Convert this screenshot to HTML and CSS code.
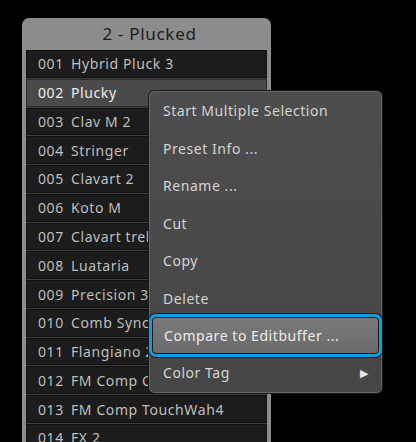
FILE: index.html
```html
<!DOCTYPE html>
<html>
<head>
<meta charset="utf-8">
<link rel="stylesheet" href="styles.css">
</head>
<body>
<div class="stage">
  <div class="bank">
    <div class="bank-title">2 - Plucked</div>
    <div class="rows">
      <div class="row"><span class="num">001</span><span class="name">Hybrid Pluck 3</span></div>
      <div class="row selected"><span class="num">002</span><span class="name">Plucky</span></div>
      <div class="row"><span class="num">003</span><span class="name">Clav M 2</span></div>
      <div class="row"><span class="num">004</span><span class="name">Stringer</span></div>
      <div class="row"><span class="num">005</span><span class="name">Clavart 2</span></div>
      <div class="row"><span class="num">006</span><span class="name">Koto M</span></div>
      <div class="row"><span class="num">007</span><span class="name">Clavart treble</span></div>
      <div class="row"><span class="num">008</span><span class="name">Luataria</span></div>
      <div class="row"><span class="num">009</span><span class="name">Precision 3</span></div>
      <div class="row"><span class="num">010</span><span class="name">Comb Sync</span></div>
      <div class="row"><span class="num">011</span><span class="name">Flangiano 2</span></div>
      <div class="row"><span class="num">012</span><span class="name">FM Comp Clav</span></div>
      <div class="row"><span class="num">013</span><span class="name">FM Comp TouchWah4</span></div>
      <div class="row"><span class="num">014</span><span class="name">FX 2</span></div>
    </div>
  </div>

  <div class="menu">
    <div class="item">Start Multiple Selection</div>
    <div class="item">Preset Info ...</div>
    <div class="item">Rename ...</div>
    <div class="item">Cut</div>
    <div class="item">Copy</div>
    <div class="item">Delete</div>
    <div class="item active">Compare to Editbuffer ...</div>
    <div class="item sub">Color Tag<span class="arrow">&#9654;</span></div>
  </div>
</div>
</body>
</html>
```
FILE: styles.css
```css
html, body {
  margin: 0;
  padding: 0;
  background: #000;
  width: 416px;
  height: 442px;
  overflow: hidden;
}

.stage {
  position: relative;
  width: 416px;
  height: 442px;
  overflow: hidden;
  padding: 18px 0 0 22px;
  box-sizing: border-box;
  font-family: "Noto Sans", "Open Sans", sans-serif;
}

.bank {
  width: 249px;
  height: 440px;
  background: #8c8c8c;
  border-radius: 7px 7px 0 0;
  padding: 0 4px;
  box-sizing: border-box;
}

.bank-title {
  height: 32px;
  line-height: 31px;
  text-align: center;
  padding-left: 6px;
  font-size: 17px;
  letter-spacing: 0.7px;
  color: #1c1c1c;
}

.rows {
  display: flex;
  flex-direction: column;
  gap: 1px;
  background: #3e3e3e;
}

.row {
  height: 27.77px;
  box-sizing: border-box;
  border: 1px solid #101010;
  background: #1c1c1c;
  display: flex;
  align-items: center;
  padding-left: 11px;
  font-size: 14px;
  letter-spacing: 0.6px;
  color: #bfbfbf;
  white-space: nowrap;
  overflow: hidden;
  flex: none;
}

.row.selected {
  background: #4a4a4a;
  border-color: #2a2a2a;
  color: #ececec;
}

.num {
  width: 33px;
  flex: none;
}

.menu {
  position: absolute;
  left: 149px;
  top: 91px;
  width: 233px;
  height: 302px;
  box-sizing: border-box;
  background: linear-gradient(#4d4d4d, #464646);
  border: 1px solid #656565;
  border-radius: 5px;
  box-shadow: 0 0 0 1px #1a1a1a;
  display: flex;
  flex-direction: column;
}

.item {
  height: 37.5px;
  flex: none;
  display: flex;
  align-items: center;
  padding-left: 13px;
  font-size: 14px;
  letter-spacing: 0.55px;
  color: #d4d4d4;
  box-sizing: border-box;
  position: relative;
}

.item.active {
  height: 43px;
  margin: -3px -1px;
  padding-left: 12px;
  border: 3px solid #0f9ee2;
  border-radius: 7px;
  background: linear-gradient(#7a7a7a, #6a6a6a);
  box-shadow: inset 0 0 0 1px #1a1a1a, 0 0 0 1px #1a1a1a;
  color: #eeeeee;
}

.item.sub {
  justify-content: space-between;
  padding-right: 12px;
}

.arrow {
  font-size: 11px;
  color: #e8e8e8;
}
```
